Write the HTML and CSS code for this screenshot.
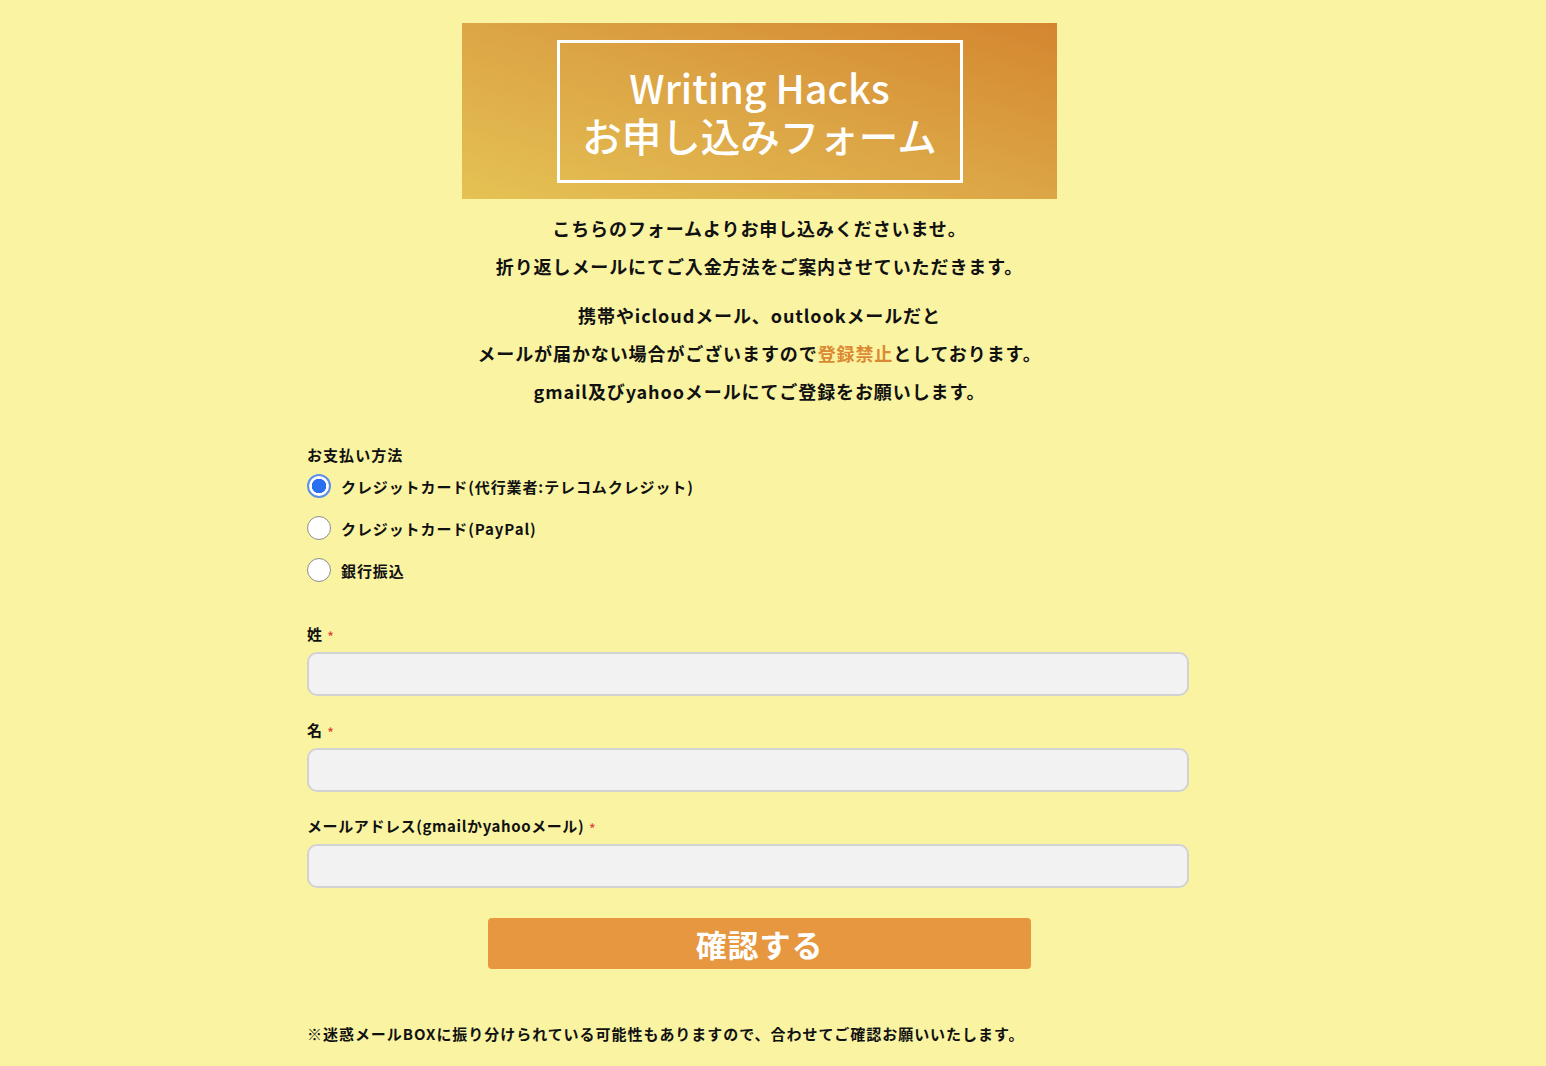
FILE: index.html
```html
<!DOCTYPE html>
<html lang="ja">
<head>
<meta charset="utf-8">
<title>Writing Hacks お申し込みフォーム</title>
<link rel="stylesheet" href="styles.css">
</head>
<body>
<main class="page">
  <div class="column">
    <header class="banner">
      <div class="banner-box">
        <h1 class="banner-title"><span class="banner-line">Writing Hacks</span><span class="banner-line">お申し込みフォーム</span></h1>
      </div>
    </header>
    <section class="intro">
      <p class="intro-p">こちらのフォームよりお申し込みくださいませ。<br>折り返しメールにてご入金方法をご案内させていただきます。</p>
      <p class="intro-p">携帯やicloudメール、outlookメールだと<br>メールが届かない場合がございますので<span class="accent">登録禁止</span>としております。<br>gmail及びyahooメールにてご登録をお願いします。</p>
    </section>
  </div>

  <form class="form">
    <div class="field">
      <div class="label label-pay">お支払い方法</div>
      <label class="radio-row"><input type="radio" name="pay" class="radio" checked><span>クレジットカード(代行業者:テレコムクレジット)</span></label>
      <label class="radio-row"><input type="radio" name="pay" class="radio"><span>クレジットカード(PayPal)</span></label>
      <label class="radio-row"><input type="radio" name="pay" class="radio"><span>銀行振込</span></label>
    </div>

    <div class="field field-text first">
      <div class="label">姓<span class="req">*</span></div>
      <input type="text" class="input">
    </div>
    <div class="field field-text">
      <div class="label">名<span class="req">*</span></div>
      <input type="text" class="input">
    </div>
    <div class="field field-text">
      <div class="label">メールアドレス(gmailかyahooメール)<span class="req">*</span></div>
      <input type="text" class="input">
    </div>

    <div class="column submit-wrap">
      <button type="button" class="submit">確認する</button>
    </div>

    <p class="note">※迷惑メールBOXに振り分けられている可能性もありますので、合わせてご確認お願いいたします。</p>
  </form>
</main>
</body>
</html>
```

FILE: styles.css
```css
html, body {
  margin: 0;
  padding: 0;
  background: #faf4a2;
}
body {
  font-family: "Noto Sans CJK JP", "Noto Sans", sans-serif;
  color: #111;
}
.page {
  width: 882px;
  margin-left: 307px;
  padding-top: 23px;
}
.column {
  width: 595px;
  margin-left: 155px;
}
.banner {
  height: 176px;
  background: linear-gradient(to top right, #e5c254 0%, #dca545 50%, #d4862f 100%);
  display: flex;
  align-items: center;
  justify-content: center;
}
.banner-box {
  width: 400px;
  height: 137px;
  border: 3px solid #fff;
  display: flex;
  align-items: center;
  justify-content: center;
}
.banner-title {
  margin: 0;
  color: #fff;
  font-size: 39.5px;
  font-weight: 500;
  text-align: center;
  display: flex;
  flex-direction: column;
  gap: 2px;
}
.banner-line {
  display: block;
  line-height: 46px;
}
.intro {
  padding-top: 10px;
  text-align: center;
}
.intro-p {
  margin: 0 -40px 10px;
  font-size: 18px;
  font-weight: 700;
  line-height: 38.3px;
  letter-spacing: 0.05em;
}
.accent {
  color: #db8a33;
}
.form {
  padding-top: 25px;
}
.field {
  display: flex;
  flex-direction: column;
}
.label {
  display: flex;
  align-items: center;
  height: 20px;
  font-size: 15px;
  font-weight: 700;
  line-height: 20px;
  letter-spacing: 0.04em;
}
.label-pay {
  letter-spacing: 0.07em;
}
.radio-row {
  display: flex;
  align-items: center;
  gap: 10px;
  height: 42px;
  font-size: 15px;
  font-weight: 700;
  letter-spacing: 0.06em;
}
.radio {
  appearance: none;
  -webkit-appearance: none;
  margin: 0;
  width: 24px;
  height: 24px;
  border-radius: 50%;
  border: 1.5px solid #8c8c8c;
  background: #fff;
  box-sizing: border-box;
  flex: none;
}
.radio:checked {
  border: 2px solid #5b8fe8;
  background: radial-gradient(circle, #2a6ff0 0 7px, #fff 7.5px);
}
.field-text {
  gap: 8px;
  margin-bottom: 24px;
}
.field-text.first {
  margin-top: 33px;
}
.req {
  color: #e04a3a;
  font-size: 12px;
  line-height: 12px;
  margin-left: 5px;
  margin-top: 4px;
}
.input {
  height: 44px;
  box-sizing: border-box;
  border: 2px solid #d2d2d2;
  border-radius: 10px;
  background: #f2f2f2;
  margin: 0;
  flex: none;
}
.submit-wrap {
  padding-top: 6px;
}
.submit {
  display: block;
  width: 543px;
  height: 51px;
  margin: 0 auto;
  border: none;
  border-radius: 4px;
  background: #e6973f;
  color: #fff;
  font-family: "Noto Sans CJK JP", sans-serif;
  font-size: 31px;
  font-weight: 700;
  letter-spacing: 0.03em;
  padding: 0;
}
.note {
  margin: 53px 0 0 0;
  font-size: 15px;
  font-weight: 700;
  letter-spacing: 0.064em;
  line-height: 24px;
}
```
